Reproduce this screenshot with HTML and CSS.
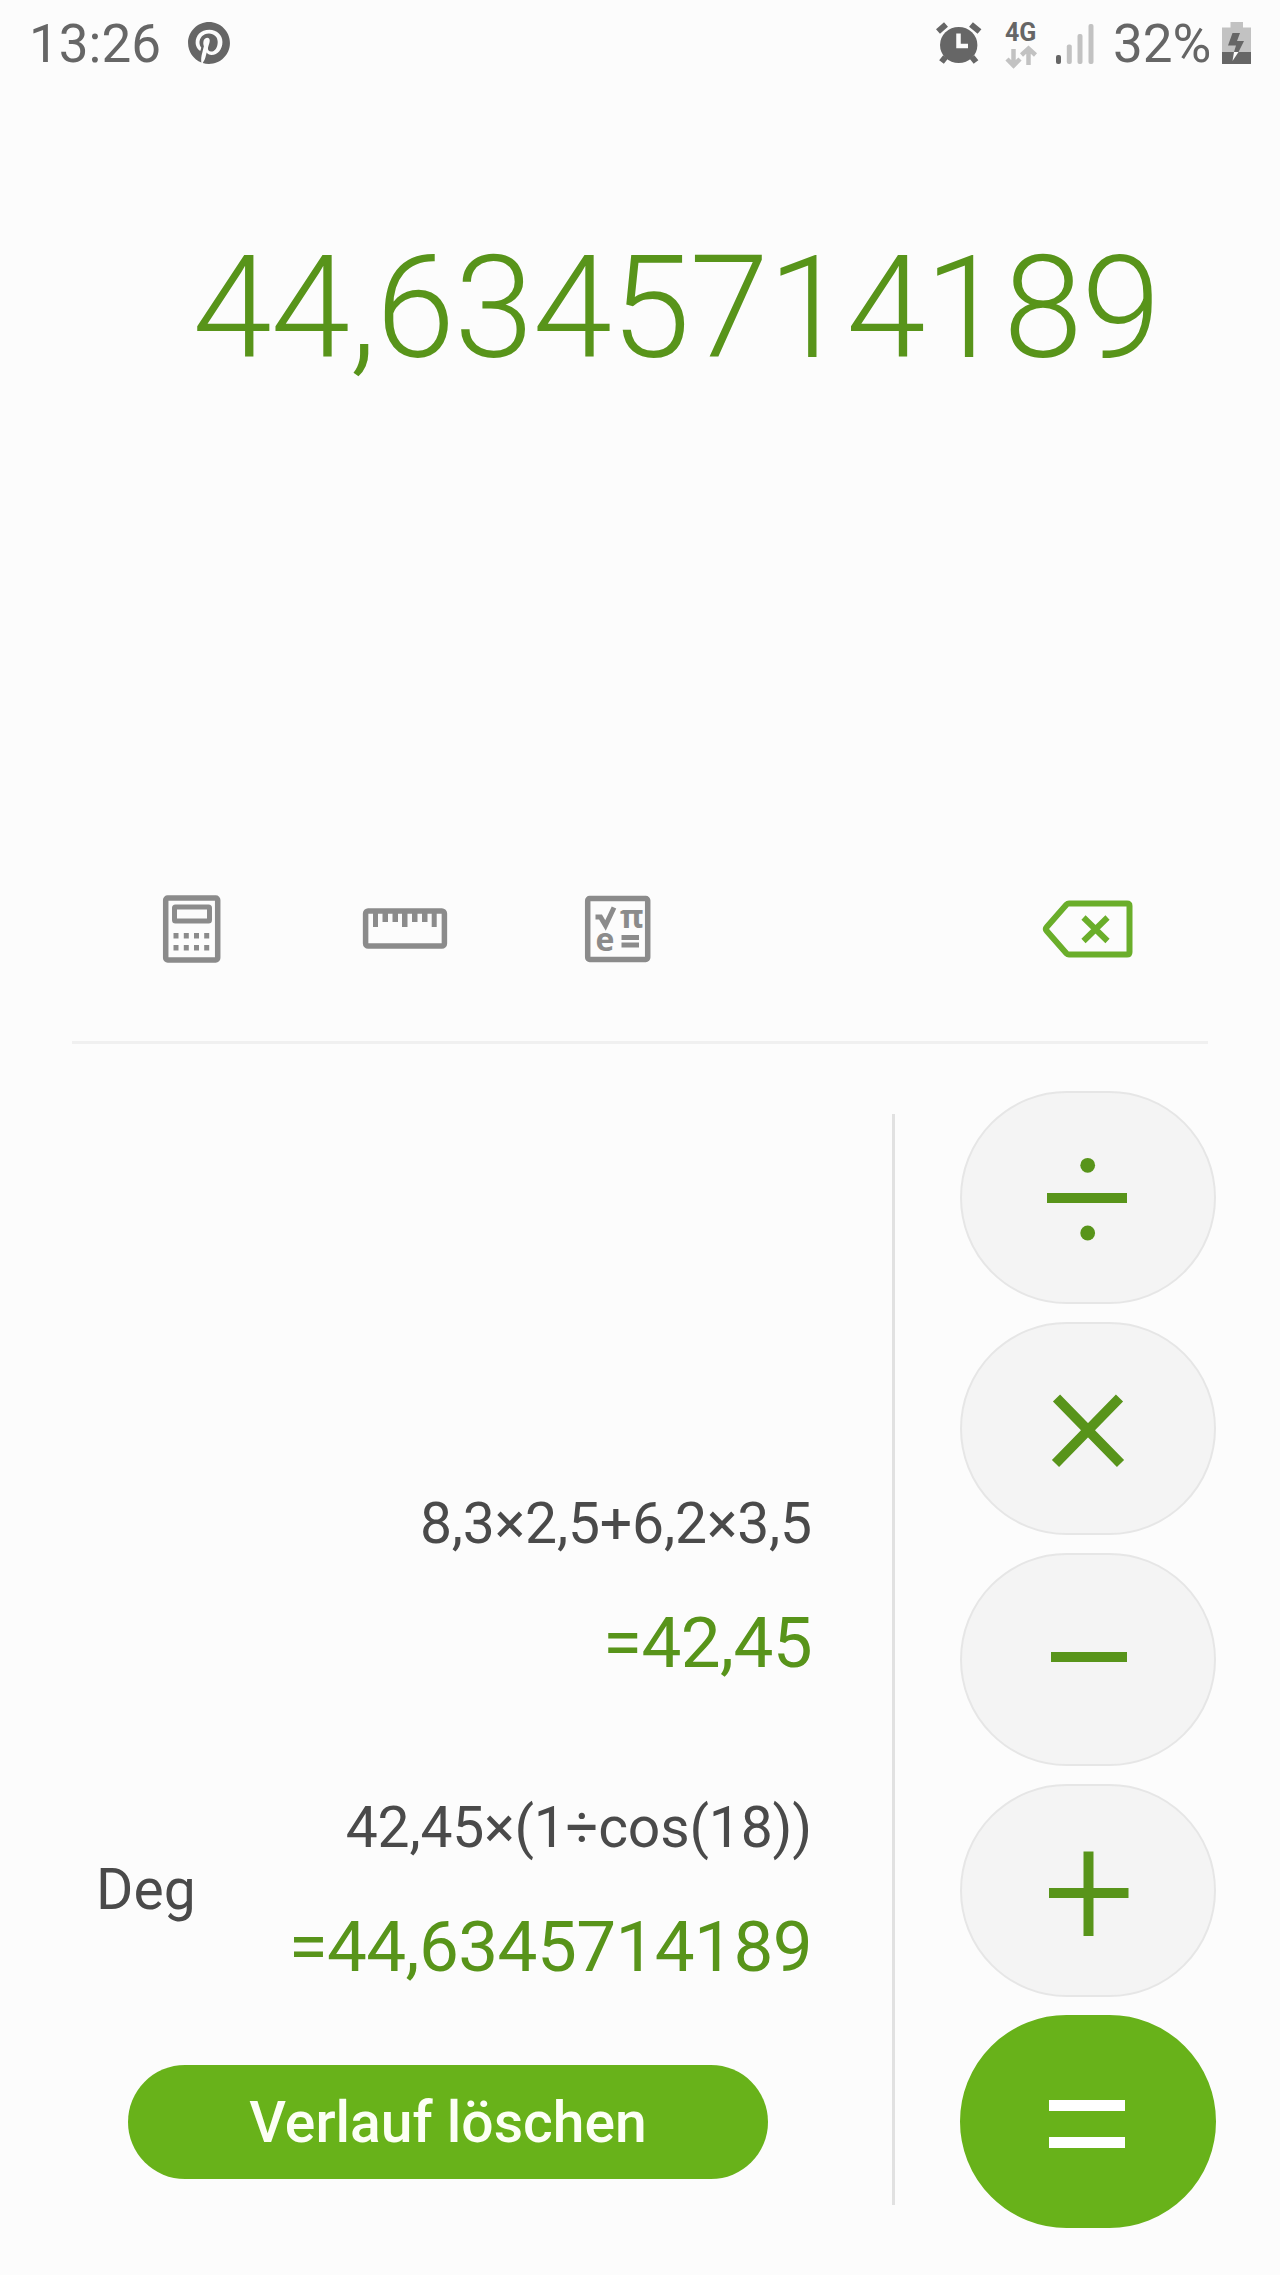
FILE: index.html
```html
<!DOCTYPE html>
<html lang="de">
<head>
  <meta charset="UTF-8">
  <title>Rechner</title>
  <meta name="viewport" content="width=device-width, initial-scale=1.0">
  <link rel="stylesheet" href="styles.css">
</head>
<body>
  <div class="phone">
    <header class="status-bar">
      <span class="time">13:26</span>
      <svg class="pinterest" width="42" height="42" viewBox="0 0 24 24"><path d="M12.017 0C5.396 0 .029 5.367.029 11.987c0 5.079 3.158 9.417 7.618 11.162-.105-.949-.199-2.403.041-3.439.219-.937 1.406-5.957 1.406-5.957s-.359-.72-.359-1.781c0-1.663.967-2.911 2.168-2.911 1.024 0 1.518.769 1.518 1.688 0 1.029-.653 2.567-.992 3.992-.285 1.193.6 2.165 1.775 2.165 2.128 0 3.768-2.245 3.768-5.487 0-2.861-2.063-4.869-5.008-4.869-3.41 0-5.409 2.562-5.409 5.199 0 1.033.394 2.143.889 2.741.099.12.112.225.085.345-.09.375-.293 1.199-.334 1.363-.053.225-.172.271-.401.165-1.495-.69-2.433-2.878-2.433-4.646 0-3.776 2.748-7.252 7.92-7.252 4.158 0 7.392 2.967 7.392 6.923 0 4.135-2.607 7.462-6.233 7.462-1.214 0-2.354-.629-2.758-1.379l-.749 2.848c-.269 1.045-1.004 2.352-1.498 3.146 1.123.345 2.306.535 3.55.535 6.607 0 11.985-5.365 11.985-11.987C23.97 5.39 18.592.026 11.985.026z"/></svg>

      <div class="status-right">
        <svg class="alarm" width="46" height="44" viewBox="0 0 46 44">
          <ellipse cx="22.700" cy="23" rx="18.700" ry="18"/>
          <path class="thick" d="M2 9.500L10 2.500M35 2.500l8.500 7"/>
          <path class="thick" d="M9.500 35L5.500 40M36 35l4 5"/>
          <path class="hand" d="M22.500 11.500v12.500h9.500"/>
        </svg>
        <svg class="network" width="34" height="48" viewBox="0 0 34 48">
          <text x="0" y="21">4G</text>
          <path d="M8.500 29v16M2 39l6.500 6.500 6.500-6.500M23.500 45V28.500M16.500 35l7-6.500 7 6.500"/>
        </svg>
        <svg class="signal" width="38" height="44" viewBox="0 0 38 44">
          <rect class="on" x="0" y="33" width="5" height="9" rx="2"/>
          <rect x="10.800" y="22.500" width="5" height="19.500" rx="2"/>
          <rect x="21.500" y="12" width="5" height="30" rx="2"/>
          <rect x="32.500" y="2" width="5" height="40" rx="2"/>
        </svg>
        <span class="percent">32%</span>
        <svg class="battery" width="29" height="44" viewBox="0 0 29 44">
          <path class="empty" d="M8.500 0H21v5.500h8V30H0V5.500h8.500z"/>
          <path class="full" d="M0 30h29v11.500q0 .5-.5.500H.5q-.5 0-.5-.500z"/>
          <path class="full" d="M10.500 11H18l-3 8h7l-5.500 11H12l2-6.500H6z"/>
          <path class="tip" d="M12 30h4.500L10.500 39z"/>
        </svg>
      </div>
    </header>

    <div class="display">44,6345714189</div>

    <nav class="toolbar">
      <svg class="tool calc" width="58" height="68" viewBox="0 0 58 68">
        <rect class="line" x="2.700" y="3" width="52" height="62" rx="2"/>
        <rect class="line thin" x="11.500" y="12" width="35" height="14" rx="1"/>
        <path d="M10.500 38h5v5.500h-5zM20.800 38h5v5.500h-5zM31 38h5v5.500h-5zM41.200 38h5v5.500h-5zM10.500 50h5v5.500h-5zM20.800 50h5v5.500h-5zM31 50h5v5.500h-5zM41.200 50h5v5.500h-5z"/>
      </svg>
      <svg class="tool ruler" width="84" height="68" viewBox="0 0 84 68">
        <rect class="line" x="2.600" y="16" width="78.800" height="35" rx="2.500"/>
        <path d="M10 16h5v16h-5zM19.500 16h5.500v11h-5.500zM29.500 16h5.500v11h-5.500zM39 16h5.500v16H39zM49 16h5.500v11H49zM59 16h5.500v11H59zM68.700 16h5v16h-5z"/>
      </svg>
      <svg class="tool science" width="66" height="68" viewBox="0 0 66 68">
        <rect class="line" x="2.700" y="3.500" width="60" height="61" rx="2"/>
        <path class="root" d="M10.500 22h5l5 8.500L29 12.500"/>
        <text x="35" y="32.500">π</text>
        <text x="10.500" y="56">e</text>
        <path d="M36.500 40H54v5H36.500zM36.500 47.500H54v5H36.500z"/>
      </svg>
      <svg class="backspace" width="90" height="58" viewBox="0 0 90 58">
        <path d="M26 3.500H84q2.500 0 2.500 2.500V52q0 2.500-2.500 2.500H26q-1.500 0-2.500-1L3.800 31q-1.800-2 0-4L23.500 4.500q1-1 2.500-1z"/>
        <path d="M40.500 17.500l24 23.500M64.500 17.500l-24 23.500"/>
      </svg>
    </nav>

    <main class="panel">
      <section class="history">
        <div class="entry">
          <p class="expression">8,3×2,5+6,2×3,5</p>
          <p class="result">=42,45</p>
        </div>
        <div class="entry with-unit">
          <span class="unit">Deg</span>
          <div>
            <p class="expression">42,45×(1÷cos(18))</p>
            <p class="result">=44,6345714189</p>
          </div>
        </div>
        <button class="clear">Verlauf löschen</button>
      </section>

      <div class="divider"></div>

      <section class="operators">
        <button class="op"><svg width="84" height="90" viewBox="0 0 84 90"><path d="M1 45h80"/><circle cx="41.700" cy="12.300" r="7.400"/><circle cx="41.700" cy="80" r="7.400"/></svg></button>
        <button class="op"><svg width="84" height="90" viewBox="0 0 84 90"><path d="M10.500 14l64 65.500M73.500 14L9.500 79.500"/></svg></button>
        <button class="op"><svg width="84" height="90" viewBox="0 0 84 90"><path d="M5 42h76"/></svg></button>
        <button class="op"><svg width="84" height="90" viewBox="0 0 84 90"><path d="M3 47h79.500M42.500 5.500v84.500"/></svg></button>
        <button class="op equals"><svg width="84" height="90" viewBox="0 0 84 90"><path d="M3 28.500h76M3 65.500h76"/></svg></button>
      </section>
    </main>
  </div>
</body>
</html>
```

FILE: styles.css
```css
:root {
  --bg: #fcfcfc;
  --green: #68b21a;
  --dark-green: #58941a;
  --status: #666;
  --faded: #c2c2c2;
  --icon: #8b8b8b;
  --text: #4a4a4a;
}

* {
  box-sizing: border-box;
  font-family: Roboto, "Liberation Sans", sans-serif;
}

body {
  margin: 0;
  background: var(--bg);
  color: var(--text);
}

p {
  margin: 0;
}

svg {
  display: block;
  flex: none;
  overflow: visible;
}

button {
  border: none;
  padding: 0;
  cursor: pointer;
}

.phone {
  width: 1280px;
  height: 2275px;
  overflow: hidden;
}

/* status bar */
.status-bar {
  display: flex;
  align-items: center;
  height: 87px;
  padding: 0 29px 0 29px;
  color: var(--status);
  fill: var(--status);
  font-size: 53px;
  line-height: 88px;
}

.time {
  width: 159px;
}

.pinterest {
  margin-bottom: 2px;
}

.status-right {
  display: flex;
  align-items: center;
  margin-left: auto;
}

.alarm {
  margin-right: 23px;
}

.alarm .thick {
  stroke: var(--status);
  stroke-width: 6;
}

.alarm .hand {
  fill: none;
  stroke: var(--bg);
  stroke-width: 4.5;
}

.network {
  margin-right: 17px;
}

.network text {
  font-size: 25px;
  font-weight: 700;
}

.network path {
  fill: none;
  stroke: var(--faded);
  stroke-width: 4.5;
}

.signal {
  margin-right: 19px;
}

.signal rect {
  fill: var(--faded);
}

.signal .on {
  fill: var(--status);
}

.percent {
  width: 109px;
}

.battery .empty {
  fill: var(--faded);
}

.battery .tip {
  fill: var(--bg);
}

/* current value */
.display {
  height: 808px;
  padding: 136px 120px 0 0;
  color: var(--dark-green);
  font-size: 143px;
  font-weight: 300;
  line-height: 170px;
  letter-spacing: -0.9px;
  text-align: right;
}

/* tools */
.toolbar {
  display: flex;
  align-items: center;
  height: 149px;
  margin: 0 72px;
  padding: 0 75px 78px 91px;
  border-bottom: 3px solid #f0f0f0;
}

.tool {
  fill: var(--icon);
}

.tool .line {
  fill: none;
  stroke: var(--icon);
  stroke-width: 5.5;
}

.tool .thin {
  stroke-width: 5;
}

.ruler {
  margin-left: 142px;
}

.science {
  margin-left: 138px;
}

.science .root {
  fill: none;
  stroke: var(--icon);
  stroke-width: 5;
}

.science text {
  font-family: "Open Sans", sans-serif;
  font-size: 32px;
  font-weight: 700;
}

.backspace {
  margin-left: auto;
}

.backspace path {
  fill: none;
  stroke: #6aae2a;
  stroke-width: 6;
}

/* history and operators */
.panel {
  display: flex;
  padding-top: 47px;
}

.history {
  display: flex;
  flex-direction: column;
  width: 892px;
  padding: 388px 80px 0 96px;
}

.entry {
  text-align: right;
}

.with-unit {
  display: flex;
  align-items: center;
  justify-content: space-between;
  margin: 90px 0 68px;
}

.expression,
.unit {
  font-size: 57px;
  line-height: 90px;
}

.expression {
  letter-spacing: -0.15px;
}

.result {
  margin-top: 24px;
  color: var(--dark-green);
  font-size: 71px;
  line-height: 100px;
  letter-spacing: -0.6px;
}

.clear {
  width: 640px;
  height: 114px;
  margin-left: 32px;
  border-radius: 57px;
  background: var(--green);
  color: #fcfff5;
  font-size: 57px;
  font-weight: 500;
}

.divider {
  width: 3px;
  height: 1091px;
  margin-top: 23px;
  background: #e1e1e1;
}

.operators {
  display: flex;
  flex-direction: column;
  gap: 18px;
  padding-left: 65px;
}

.op {
  display: flex;
  align-items: center;
  justify-content: center;
  width: 256px;
  height: 213px;
  border: 2px solid #e6e6e6;
  border-radius: 107px;
  background: #f4f4f4;
  fill: var(--dark-green);
  stroke: var(--dark-green);
}

.op path {
  stroke-width: 10;
}

.op circle {
  stroke: none;
}

.equals {
  border-color: var(--green);
  background: var(--green);
  stroke: #fff;
}

.equals path {
  stroke-width: 11;
}
```
